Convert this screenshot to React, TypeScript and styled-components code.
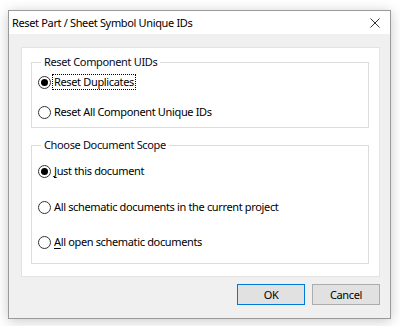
import React, { useState } from "react";
import styled, { createGlobalStyle } from "styled-components";

const GlobalStyle = createGlobalStyle`
    html, body {
        margin: 0;
        padding: 0;
        background: #ffffff;
    }
    body {
        font-family: "Noto Sans", "Open Sans", sans-serif;
        font-size: 11px;
        letter-spacing: -0.35px;
        color: #000000;
    }
`;

const Page = styled.div`
    width: 400px;
    height: 326px;
    padding: 10px 0 0 8px;
    box-sizing: border-box;
`;

const Window = styled.div`
    width: 383px;
    height: 309px;
    box-sizing: border-box;
    border: 1px solid #9a9a9a;
    background: #f0f0f0;
    box-shadow: 0 2px 12px rgba(0, 0, 0, 0.22);
    display: flex;
    flex-direction: column;
`;

const TitleBar = styled.div`
    height: 23px;
    background: #ffffff;
    display: flex;
    align-items: center;
    justify-content: space-between;
    padding: 0 9px 0 3px;
`;

const Title = styled.span`
    font-size: 11px;
    line-height: 16px;
    color: #000000;
`;

const CloseButton = styled.button`
    width: 12px;
    height: 12px;
    padding: 0;
    border: none;
    background: transparent;
    display: flex;
    align-items: center;
    justify-content: center;
`;

const Body = styled.div`
    flex: 1;
    display: flex;
    flex-direction: column;
    padding: 13px 10px 0 12px;
`;

const Panel = styled.div`
    background: #ffffff;
    border: 1px solid #e3e3e3;
    padding: 6px 10px 12px 9px;
    display: flex;
    flex-direction: column;
    gap: 9px;
`;

const Group = styled.fieldset<{ $top: number; $bottom: number }>`
    margin: 0;
    min-width: 0;
    border: 1px solid #dcdcdc;
    padding: ${(p) => p.$top}px 0 ${(p) => p.$bottom}px 6px;
    display: flex;
    flex-direction: column;
`;

const Legend = styled.legend`
    padding: 0 3px;
    margin-left: 3px;
    line-height: 16px;
    font-size: 11px;
    color: #0a0a1e;
`;

const Option = styled.label<{ $space: number }>`
    display: flex;
    align-items: center;
    height: 16px;
    margin-top: ${(p) => p.$space}px;
    cursor: default;
    &:first-of-type {
        margin-top: 0;
    }
`;

const Circle = styled.span<{ $on: boolean }>`
    width: 13px;
    height: 13px;
    box-sizing: border-box;
    border-radius: 50%;
    border: 1px solid #333333;
    background: #ffffff;
    display: flex;
    align-items: center;
    justify-content: center;
    margin-right: 2px;
    flex-shrink: 0;
    &::after {
        content: "";
        width: 7px;
        height: 7px;
        border-radius: 50%;
        background: ${(p) => (p.$on ? "#000000" : "transparent")};
    }
`;

const Text = styled.span<{ $focus?: boolean }>`
    line-height: 14px;
    padding: 0 1px;
    outline: ${(p) => (p.$focus ? "1px dotted #000000" : "none")};
    white-space: nowrap;
`;

const Key = styled.span`
    text-decoration: underline;
    text-underline-offset: 2px;
`;

const Footer = styled.div`
    display: flex;
    justify-content: flex-end;
    gap: 7px;
    margin-top: 7px;
`;

const Button = styled.button<{ $primary?: boolean }>`
    width: 68px;
    height: 21px;
    box-sizing: border-box;
    background: #e1e1e1;
    border: 1px solid ${(p) => (p.$primary ? "#0078d7" : "#adadad")};
    font-family: inherit;
    font-size: 11px;
    letter-spacing: inherit;
    color: #000000;
    padding: 0;
`;

const App = () => {
    const [mode, setMode] = useState("dup");
    const [scope, setScope] = useState("doc");

    return (
        <Page>
            <GlobalStyle />
            <Window>
                <TitleBar>
                    <Title>Reset Part / Sheet Symbol Unique IDs</Title>
                    <CloseButton>
                        <svg width="10" height="10" viewBox="0 0 10 10">
                            <path d="M0.5 0.5 L9.5 9.5 M9.5 0.5 L0.5 9.5" stroke="#333" strokeWidth="1" fill="none" />
                        </svg>
                    </CloseButton>
                </TitleBar>
                <Body>
                    <Panel>
                        <Group $top={4} $bottom={7}>
                            <Legend>Reset Component UIDs</Legend>
                            <Option $space={0} onClick={() => setMode("dup")}>
                                <Circle $on={mode === "dup"} />
                                <Text $focus>Reset Duplicates</Text>
                            </Option>
                            <Option $space={14} onClick={() => setMode("all")}>
                                <Circle $on={mode === "all"} />
                                <Text>Reset All Component Unique IDs</Text>
                            </Option>
                        </Group>
                        <Group $top={10} $bottom={13}>
                            <Legend>Choose Document Scope</Legend>
                            <Option $space={0} onClick={() => setScope("doc")}>
                                <Circle $on={scope === "doc"} />
                                <Text><Key>J</Key>ust this document</Text>
                            </Option>
                            <Option $space={20} onClick={() => setScope("project")}>
                                <Circle $on={scope === "project"} />
                                <Text>All schematic documents in the current project</Text>
                            </Option>
                            <Option $space={19} onClick={() => setScope("open")}>
                                <Circle $on={scope === "open"} />
                                <Text><Key>A</Key>ll open schematic documents</Text>
                            </Option>
                        </Group>
                    </Panel>
                    <Footer>
                        <Button $primary>OK</Button>
                        <Button>Cancel</Button>
                    </Footer>
                </Body>
            </Window>
        </Page>
    );
};

export default App;
